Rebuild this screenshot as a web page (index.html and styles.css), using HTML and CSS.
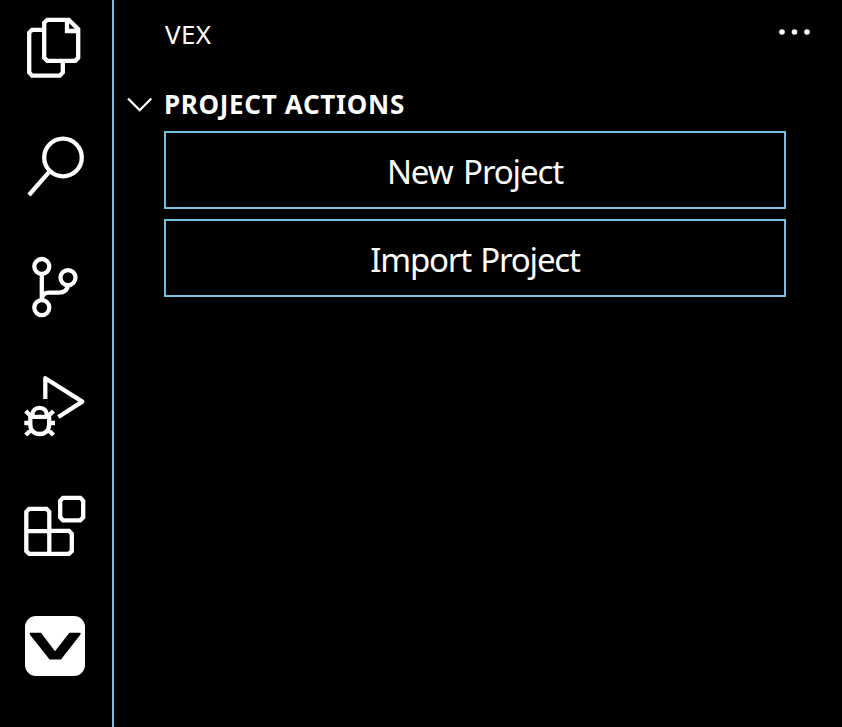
FILE: index.html
```html
<!DOCTYPE html>
<html lang="en">
<head>
<meta charset="utf-8">
<title>VEX</title>
<link rel="stylesheet" href="styles.css">
</head>
<body>
<div class="app">
  <nav class="activity-bar">
    <svg class="icon" viewBox="0 0 80 80"><path d="M34.2 24.8H22L19.2 27.8V67.5L22 70.7H49.8L52.8 67.5V56M37.3 14.8H58.8L68.2 24.2V52.8L65.2 55.8H37.3L34.2 52.8V17.8ZM57 14.8V26H68"/></svg>
    <svg class="icon" viewBox="0 0 80 80"><circle cx="53" cy="32.5" r="18.8"/><path d="M39.6 46.3L19 70"/></svg>
    <svg class="icon" viewBox="0 0 80 80"><circle cx="31.8" cy="21.5" r="7.5"/><circle cx="58" cy="32.6" r="7.5"/><circle cx="31.8" cy="62.6" r="7.5"/><path d="M31.8 29V55M31.8 55C32 50 34.5 47.6 39 47.6H49C54 47.6 57.5 45 58 40"/></svg>
    <svg class="icon" viewBox="0 0 80 80"><path class="play" d="M35.3 34V13.2L72.3 36.6L48.3 52"/><path d="M22.4 51V50C22.4 45.5 25.2 42.8 29.6 42.8S36.8 45.5 36.8 50V51M20.3 51.8H39.1V60C39.1 65.5 35 69 29.7 69S20.3 65.5 20.3 60ZM14.3 58H20M39 58H45M15.7 46L21.5 51.8M43.5 46L37.8 51.8M15.7 70L21.7 64.2M43.5 70L37.5 64.2"/></svg>
    <svg class="icon" viewBox="0 0 80 80"><path d="M19.2 23.8H36.5L39.3 26.8V45.8H59L61.8 48.8V66L59 68.8H19.2L16.3 66V26.8ZM16.3 46.2H39.3V68.8M53 12.8H70.3L73.2 15.8V32.3L70.3 35.3H53L50.2 32.3V15.8Z"/></svg>
    <svg class="icon" viewBox="0 0 80 80"><rect class="badge" x="15" y="11" width="60" height="60" rx="11"/><path class="mark" d="M19.8 27.7H31L45 46.2L59.4 27.7H70.5V29.5L51 54.5H39.6L19.8 29.5Z"/></svg>
  </nav>
  <main class="sidebar">
    <header class="title-row">
      <h1 class="title">VEX</h1>
      <svg class="more" viewBox="0 0 34 8"><circle cx="4" cy="4" r="2.8"/><circle cx="16.5" cy="4" r="2.8"/><circle cx="29" cy="4" r="2.8"/></svg>
    </header>
    <section>
      <div class="section-row">
        <svg class="chevron" viewBox="0 0 26 16"><path d="M1 1.5L12.7 13.2L24.3 1.5"/></svg>
        <h2 class="section-title">PROJECT ACTIONS</h2>
      </div>
      <div class="actions">
        <button class="action new">New Project</button>
        <button class="action import">Import Project</button>
      </div>
    </section>
  </main>
</div>
</body>
</html>
```
FILE: styles.css
```css
* { box-sizing: border-box; }
body {
  margin: 0;
  background: #000;
  color: #fff;
  font-family: "Noto Sans", "Open Sans", sans-serif;
}
.app { display: flex; height: 727px; overflow: hidden; }
.activity-bar {
  display: flex;
  flex-direction: column;
  flex: none;
  gap: 40px;
  width: 114px;
  padding: 5px 0 0 10px;
  border-right: 2px solid #6fc3df;
}
.icon {
  flex: none;
  width: 80px;
  height: 80px;
  fill: none;
  stroke: #fff;
  stroke-width: 4.3;
}
.icon .play { stroke-linejoin: round; }
.icon .badge { fill: #fff; stroke: none; }
.icon .mark { fill: #000; stroke: none; }
.sidebar { flex: 1; }
.title-row {
  display: flex;
  justify-content: space-between;
  height: 70px;
  padding: 0 30px 0 51px;
}
.title {
  margin: 0;
  font-size: 26px;
  font-weight: 400;
  line-height: 68px;
  letter-spacing: 0.3px;
}
.more { width: 34px; height: 8px; margin-top: 28px; fill: #fff; }
.section-row {
  display: flex;
  align-items: center;
  height: 61px;
  padding: 8px 0 0 13px;
}
.chevron {
  width: 26px;
  height: 16px;
  margin-right: 11px;
  fill: none;
  stroke: #fff;
  stroke-width: 2.3;
}
.section-title {
  margin: 0;
  font-size: 26px;
  font-weight: 700;
  line-height: 53px;
  letter-spacing: 0.68px;
}
.actions {
  display: flex;
  flex-direction: column;
  gap: 10px;
  width: 622px;
  margin-left: 50px;
}
.action {
  height: 78px;
  padding: 4px 0 0;
  border: 2px solid #6fc3df;
  background: #000;
  color: #fff;
  font: 400 33px/70px "Noto Sans", "Open Sans", sans-serif;
}
.new { letter-spacing: -1.1px; word-spacing: 3px; }
.import { letter-spacing: -1.2px; word-spacing: 2px; }
```
